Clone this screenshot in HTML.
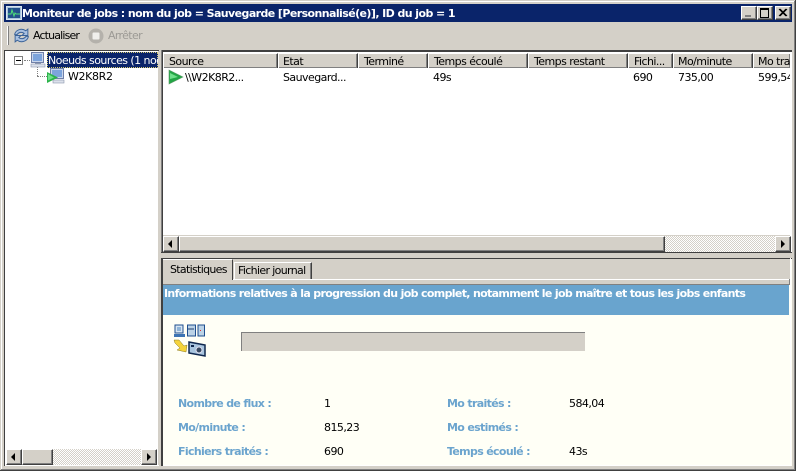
<!DOCTYPE html>
<html><head><meta charset="utf-8"><style>
html,body{margin:0;padding:0;background:#d4d0c8}
#w{position:relative;width:796px;height:471px;overflow:hidden;background:#d4d0c8;font:11px "DejaVu Sans","Liberation Sans",sans-serif;letter-spacing:-.55px;color:#000}
#w div,#w span.a,#w svg{position:absolute;white-space:nowrap}
.t{line-height:14px}
.hc{top:53px;height:15px;background:#d4d0c8;border-top:1px solid #fff;border-left:1px solid #fff;border-right:1px solid #404040;border-bottom:0;box-shadow:inset -1px -1px 0 #808080;box-sizing:border-box;line-height:14px;padding-left:5px;padding-top:1px;overflow:hidden}
.btn{width:16px;height:16px;background:#d4d0c8;box-sizing:border-box;border-top:1px solid #fff;border-left:1px solid #fff;border-right:1px solid #404040;border-bottom:1px solid #404040;box-shadow:inset -1px -1px 0 #808080}
.track{background-color:#ebe9e5;background-image:repeating-conic-gradient(#d4d0c8 0 25%,#fff 0 50%);background-size:2px 2px}
.lab{color:#6ba4ce;font-weight:bold;letter-spacing:-.66px;line-height:14px}
.val{line-height:14px}
</style></head><body><div id="w">
<!-- window frame -->
<div style="left:0;top:0;width:796px;height:1px;background:#d4d0c8"></div>
<div style="left:1px;top:1px;width:793px;height:1px;background:#fff"></div>
<div style="left:1px;top:1px;width:1px;height:468px;background:#fff"></div>
<div style="left:794px;top:1px;width:1px;height:469px;background:#808080"></div>
<div style="left:795px;top:0;width:1px;height:471px;background:#404040"></div>
<div style="left:1px;top:469px;width:794px;height:1px;background:#808080"></div>
<div style="left:0;top:470px;width:796px;height:1px;background:#404040"></div>

<!-- title bar -->
<div style="left:4px;top:4px;width:788px;height:18px;background:#0a246a"></div>
<svg style="left:6px;top:5px" width="16" height="16" viewBox="0 0 16 16"><rect x=".5" y="1.5" width="15" height="13" fill="#a9c4dc" stroke="#d8e4ee"/><rect x="2" y="3" width="12" height="10" fill="#24508c"/><path d="M2 9h3l1-4 2 6 1-3 1 1h4" fill="none" stroke="#4fe07a" stroke-width="1"/></svg>
<div class="t" style="left:22px;top:7px;color:#fff;font-weight:bold;letter-spacing:-.58px;font-size:11px">Moniteur de jobs : nom du job = Sauvegarde [Personnalisé(e)], ID du job = 1</div>
<!-- caption buttons -->
<div class="btn" style="left:741px;top:6px;width:16px;height:14px"></div>
<div style="left:745px;top:15px;width:6px;height:2px;background:#808080"></div>
<div class="btn" style="left:757px;top:6px;width:16px;height:14px"></div>
<div style="left:760px;top:8px;width:7px;height:7px;border:1px solid #000;border-top-width:2px;box-sizing:content-box"></div>
<div class="btn" style="left:775px;top:6px;width:16px;height:14px"></div>
<svg style="left:778px;top:8px" width="10" height="9" viewBox="0 0 10 9"><path d="M1 1l7 7M2 1l7 7M8 1L1 8M9 1L2 8" stroke="#000" stroke-width="1"/></svg>

<!-- toolbar -->
<div style="left:7px;top:26px;width:1px;height:19px;background:#fff"></div>
<div style="left:8px;top:26px;width:1px;height:19px;background:#808080"></div>
<svg style="left:13px;top:27px" width="17" height="17" viewBox="0 0 16 16"><path d="M1.500 7a6.500 6 0 0 1 10.500-3.500l2-1.500v6H8.500l2-2a4.300 4 0 0 0-6.500 1z" fill="#a9c0e0" stroke="#3a6298" stroke-width=".9"/><path d="M14.500 9a6.500 6 0 0 1-10.500 3.500L2 14V8h5.500l-2 2a4.300 4 0 0 0 6.500-1z" fill="#a9c0e0" stroke="#3a6298" stroke-width=".9"/></svg>
<div class="t" style="left:33px;top:29px;letter-spacing:-.85px">Actualiser</div>
<svg style="left:88px;top:28px" width="16" height="16" viewBox="0 0 16 16"><circle cx="8" cy="8" r="7.500" fill="#b4b1ab"/><rect x="4.500" y="4.500" width="7" height="7" rx="1" fill="#f0efec"/></svg>
<div class="t" style="left:108px;top:29px;color:#9c9a95;letter-spacing:-.65px">Arrêter</div>

<!-- left pane -->
<div style="left:4px;top:50px;width:155px;height:416px;background:#fff;box-shadow:inset 1px 1px 0 #404040,inset -1px -1px 0 #d4d0c8"></div>
<div style="left:5px;top:465px;width:154px;height:1px;background:#fff"></div>
<div style="left:14px;top:56px;width:9px;height:9px;border:1px solid #808080;box-sizing:border-box;background:#fff"></div>
<div style="left:16px;top:60px;width:5px;height:1px;background:#000"></div>
<div style="left:24px;top:60px;width:6px;height:0;border-top:1px dotted #808080"></div>
<div style="left:37px;top:67px;width:0;height:9px;border-left:1px dotted #808080"></div>
<div style="left:37px;top:76px;width:10px;height:0;border-top:1px dotted #808080"></div>
<svg style="left:30px;top:52px" width="16" height="16" viewBox="0 0 16 16"><rect x="1.500" y=".5" width="12" height="10" fill="#c9d6ec" stroke="#7080a8"/><rect x="3" y="2" width="9" height="7" fill="#7da4dc"/><rect x="5" y="11" width="6" height="1" fill="#8f9ab0"/><rect x="1" y="12" width="14" height="3" fill="#dbe0ea" stroke="#8a94ac" stroke-width=".6"/></svg>
<div style="left:47px;top:52px;width:111px;height:16px;background:#0a246a;outline:1px dotted #d4c870;outline-offset:-1px"></div>
<div class="t" style="left:48px;top:54px;width:110px;overflow:hidden;color:#fff;letter-spacing:-.55px">Noeuds sources (1 noeud)</div>
<svg style="left:47px;top:68px" width="18" height="16" viewBox="0 0 18 16"><rect x="3.500" y=".5" width="13" height="10" fill="#c9d6ec" stroke="#7080a8"/><rect x="5" y="2" width="10" height="7" fill="#7da4dc"/><rect x="6" y="12" width="11" height="3" fill="#dbe0ea" stroke="#8a94ac" stroke-width=".6"/><path d="M0 4l11 5.500L0 15z" fill="#2cb34a"/><path d="M1 6l6 3.500-6 3z" fill="#6fe08a"/></svg>
<div class="t" style="left:68px;top:70px;letter-spacing:-.35px">W2K8R2</div>

<!-- left scrollbar -->
<div class="track" style="left:53px;top:449px;width:88px;height:16px"></div>
<div class="btn" style="left:6px;top:449px"></div>
<svg style="left:11px;top:453px" width="6" height="8"><path d="M4 0v8L0 4z" fill="#000"/></svg>
<div class="btn" style="left:22px;top:449px;width:31px"></div>
<div class="btn" style="left:141px;top:449px"></div>
<svg style="left:147px;top:453px" width="6" height="8"><path d="M0 0v8l4-4z" fill="#000"/></svg>

<!-- list pane -->
<div style="left:161px;top:50px;width:631px;height:203px;background:#fff;box-shadow:inset 1px 0 0 #808080,inset 2px 2px 0 #404040"></div>
<div class="hc" style="left:163px;width:115px">Source</div>
<div class="hc" style="left:278px;width:80px;padding-left:4px">Etat</div>
<div class="hc" style="left:358px;width:70px">Terminé</div>
<div class="hc" style="left:428px;width:100px">Temps écoulé</div>
<div class="hc" style="left:528px;width:100px">Temps restant</div>
<div class="hc" style="left:628px;width:45px">Fichi...</div>
<div class="hc" style="left:673px;width:80px;padding-left:4px">Mo/minute</div>
<div class="hc" style="left:753px;width:37px;border-right:0;padding-left:4px">Mo tra</div>
<svg style="left:168px;top:69px" width="16" height="16" viewBox="0 0 16 16"><path d="M1 1l14 7L1 15z" fill="#22a545" stroke="#5f9a6a" stroke-width=".6"/><path d="M2 4l8 4-8 2z" fill="#6fe08a"/></svg>
<div class="t" style="left:185px;top:71px">\\W2K8R2...</div>
<div class="t" style="left:283px;top:71px">Sauvegard...</div>
<div class="t" style="left:433px;top:71px">49s</div>
<div class="t" style="left:633px;top:71px">690</div>
<div class="t" style="left:678px;top:71px">735,00</div>
<div class="t" style="left:758px;top:71px;width:32px;overflow:hidden">599,54</div>
<!-- list scrollbar -->
<div class="track" style="left:665px;top:236px;width:110px;height:16px"></div>
<div style="left:163px;top:235px;width:627px;height:1px;background:#d4d0c8"></div>
<div class="btn" style="left:163px;top:236px"></div>
<svg style="left:168px;top:240px" width="6" height="8"><path d="M4 0v8L0 4z" fill="#000"/></svg>
<div class="btn" style="left:179px;top:236px;width:486px"></div>
<div class="btn" style="left:775px;top:236px"></div>
<svg style="left:781px;top:240px" width="6" height="8"><path d="M0 0v8l4-4z" fill="#000"/></svg>
<div style="left:161px;top:252px;width:631px;height:1px;background:#404040"></div>

<!-- lower pane -->
<div style="left:161px;top:258px;width:631px;height:208px;background:#fffff6;box-shadow:inset 2px 1px 0 #404040"></div>
<div style="left:163px;top:259px;width:627px;height:26px;background:#d4d0c8"></div>
<div style="left:163px;top:279px;width:627px;height:1px;background:#fff"></div>
<div style="left:163px;top:284px;width:627px;height:1px;background:#808080"></div>
<div style="left:789px;top:279px;width:1px;height:6px;background:#808080"></div>
<!-- tabs -->
<div style="left:163px;top:259px;width:70px;height:21px;background:#d4d0c8;border-top:1px solid #fff;border-right:1px solid #404040;box-sizing:border-box"></div>
<div class="t" style="left:170px;top:263px;letter-spacing:-.68px">Statistiques</div>
<div style="left:234px;top:262px;width:78px;height:17px;background:#d4d0c8;border-top:1px solid #fff;border-left:1px solid #fff;border-right:1px solid #404040;box-shadow:inset -1px 0 0 #808080;box-sizing:border-box"></div>
<div class="t" style="left:238px;top:264px;letter-spacing:-.65px">Fichier journal</div>
<!-- banner -->
<div style="left:163px;top:285px;width:626px;height:30px;background:#69a4ce"></div>
<div class="t" style="left:164px;top:287px;color:#fff;font-weight:bold;letter-spacing:-.66px">Informations relatives à la progression du job complet, notamment le job maître et tous les jobs enfants</div>
<!-- icon -->
<svg style="left:173px;top:324px" width="34" height="34" viewBox="0 0 34 34"><rect x="2" y="1" width="8" height="8" fill="#d8e6f2" stroke="#1f4f8f"/><rect x="4" y="3" width="4" height="4" fill="#8fb4d8"/><rect x="1" y="10" width="11" height="3" fill="#3d74b4"/><rect x="14.500" y="1" width="8" height="11" fill="#bcd3e6" stroke="#1f4f8f"/><path d="M15 5h6" stroke="#1f3f6f"/><rect x="25" y="1" width="6.500" height="11" fill="#bcd3e6" stroke="#1f4f8f"/><rect x="27" y="6" width="1" height="1" fill="#e03030"/><path d="M1 16h5l5 6 3-1-1 7-9-2 3-2-5-5z" fill="#f5d33a" stroke="#8a7a20" stroke-width=".5"/><path d="M16 18l16 3v11l-16-3z" fill="#a8c4de" stroke="#10284f" stroke-width="1.500"/><circle cx="26" cy="26" r="3" fill="#33465f" stroke="#dde"/><rect x="18" y="21" width="3" height="2" fill="#10284f"/></svg>
<!-- progress -->
<div style="left:241px;top:332px;width:344px;height:19px;background:#d4d0c8;border-top:1px solid #808080;border-left:1px solid #808080;box-sizing:border-box"></div>
<!-- stats -->
<div class="lab" style="left:178px;top:397px">Nombre de flux :</div>
<div class="val" style="left:324px;top:397px">1</div>
<div class="lab" style="left:178px;top:421px">Mo/minute :</div>
<div class="val" style="left:324px;top:421px">815,23</div>
<div class="lab" style="left:178px;top:445px">Fichiers traités :</div>
<div class="val" style="left:324px;top:445px">690</div>
<div class="lab" style="left:447px;top:397px">Mo traités :</div>
<div class="val" style="left:569px;top:397px">584,04</div>
<div class="lab" style="left:447px;top:421px">Mo estimés :</div>
<div class="lab" style="left:447px;top:445px">Temps écoulé :</div>
<div class="val" style="left:569px;top:445px">43s</div>
<div style="left:163px;top:465px;width:628px;height:1px;background:#fff"></div>
<div style="left:790px;top:258px;width:1px;height:208px;background:#fff"></div>
</div></body></html>
